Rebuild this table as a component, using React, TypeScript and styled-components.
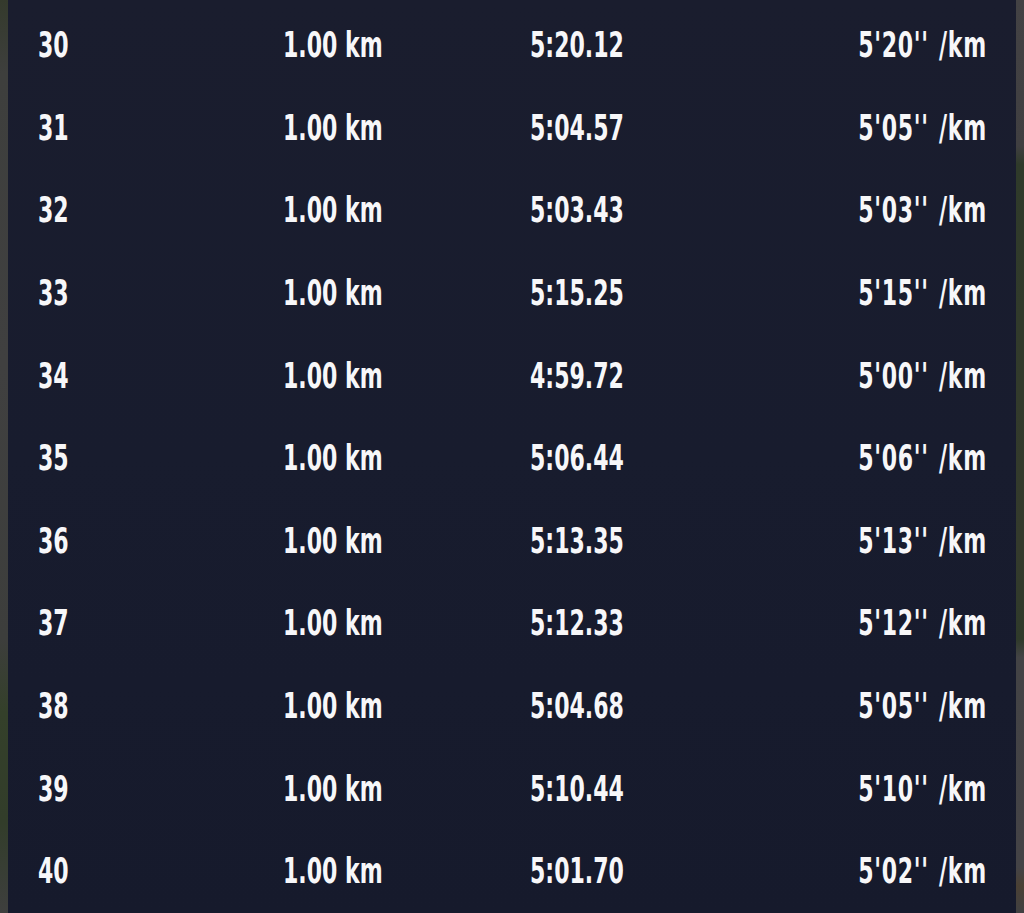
import React from "react";
import styled, { createGlobalStyle } from "styled-components";

type Split = {
  km: number;
  distance: string;
  time: string;
  pace: string;
};

const splits: Split[] = [
  { km: 30, distance: "1.00 km", time: "5:20.12", pace: "5'20'' /km" },
  { km: 31, distance: "1.00 km", time: "5:04.57", pace: "5'05'' /km" },
  { km: 32, distance: "1.00 km", time: "5:03.43", pace: "5'03'' /km" },
  { km: 33, distance: "1.00 km", time: "5:15.25", pace: "5'15'' /km" },
  { km: 34, distance: "1.00 km", time: "4:59.72", pace: "5'00'' /km" },
  { km: 35, distance: "1.00 km", time: "5:06.44", pace: "5'06'' /km" },
  { km: 36, distance: "1.00 km", time: "5:13.35", pace: "5'13'' /km" },
  { km: 37, distance: "1.00 km", time: "5:12.33", pace: "5'12'' /km" },
  { km: 38, distance: "1.00 km", time: "5:04.68", pace: "5'05'' /km" },
  { km: 39, distance: "1.00 km", time: "5:10.44", pace: "5'10'' /km" },
  { km: 40, distance: "1.00 km", time: "5:01.70", pace: "5'02'' /km" },
];

const GlobalStyle = createGlobalStyle`
  html, body {
    margin: 0;
    padding: 0;
    background: #3b3d3b;
  }
`;

const Screen = styled.div`
  display: flex;
  width: 1024px;
  height: 913px;
  overflow: hidden;
`;

const MapEdge = styled.div<{ $side: "left" | "right" }>`
  width: 8px;
  flex-shrink: 0;
  background: ${(p) =>
    p.$side === "left"
      ? "linear-gradient(180deg, #343a2c 0%, #3e3f3d 8%, #404040 40%, #3d3e3c 70%, #34402a 78%, #323d2a 90%, #3e3f3e 100%)"
      : "linear-gradient(180deg, #434244 0%, #403f41 16%, #2f3a2a 18%, #343a2c 60%, #2f3a2a 70%, #434345 72%, #444346 95%, #4a4034 97%, #404042 100%)"};
`;

const Panel = styled.div`
  flex: 1;
  background: linear-gradient(180deg, #1a1d2e 0%, #181c2e 50%, #161a2c 100%);
  padding: 4px 29px 0 30px;
  display: flex;
  flex-direction: column;
`;

const Row = styled.div`
  display: grid;
  grid-template-columns: 245px 247px 1fr auto;
  align-items: center;
  height: 82.6px;
  font-family: "DejaVu Sans Condensed", "DejaVu Sans", sans-serif;
  font-weight: 700;
  font-size: 35px;
  color: #f7f7f9;
`;

const Cell = styled.span<{ $align?: "left" | "right" }>`
  display: inline-block;
  white-space: pre;
  justify-self: ${(p) => (p.$align === "right" ? "end" : "start")};
  transform: scaleX(0.7);
  transform-origin: ${(p) => (p.$align === "right" ? "right" : "left")} center;
  letter-spacing: ${(p) => (p.$align === "right" ? "1px" : "0")};
  word-spacing: ${(p) => (p.$align === "right" ? "3px" : "0")};
`;

const App = () => {
  return (
    <>
      <GlobalStyle />
      <Screen>
        <MapEdge $side="left" />
        <Panel>
          {splits.map((s) => (
            <Row key={s.km}>
              <Cell>{s.km}</Cell>
              <Cell>{s.distance}</Cell>
              <Cell>{s.time}</Cell>
              <Cell $align="right">{s.pace}</Cell>
            </Row>
          ))}
        </Panel>
        <MapEdge $side="right" />
      </Screen>
    </>
  );
};

export default App;
